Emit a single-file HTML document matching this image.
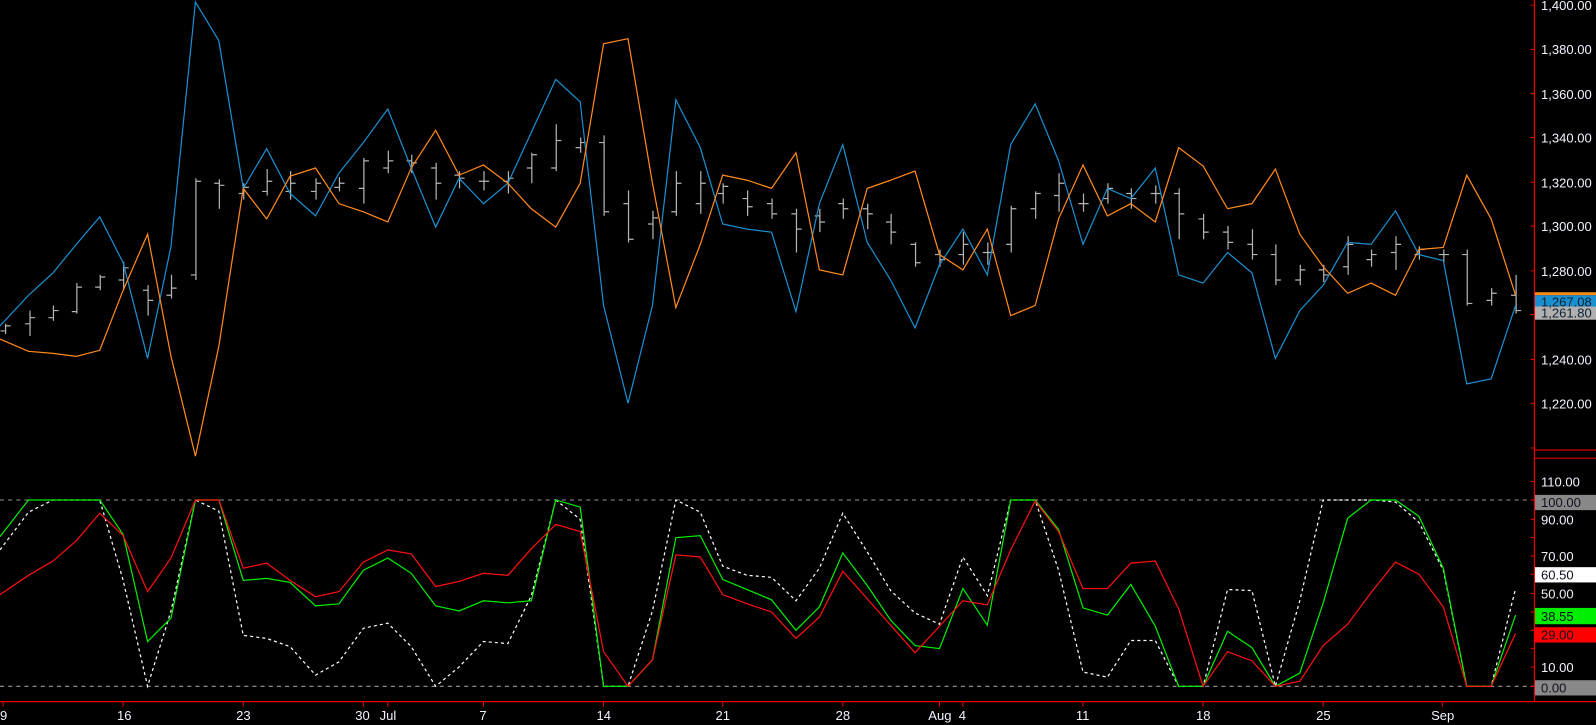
<!DOCTYPE html>
<html><head><meta charset="utf-8"><style>
html,body{margin:0;padding:0;background:#000;overflow:hidden}
svg{display:block}
text{font-family:"Liberation Sans",sans-serif;font-size:12.8px}
</style></head><body>
<svg width="1596" height="725" viewBox="0 0 1568 712" preserveAspectRatio="none" xmlns="http://www.w3.org/2000/svg">
<rect width="1568" height="712" fill="#000"/>
<g id="bars" stroke="#b4b4b4" stroke-width="1.2" fill="none"></g>
<polyline id="blue" fill="none" stroke="#1a8fd0" stroke-width="1.2"/>
<polyline id="orange" fill="none" stroke="#ff8a1c" stroke-width="1.2"/>
<line x1="0" y1="491" x2="1507" y2="491" stroke="#999" stroke-dasharray="4,4"/>
<line x1="0" y1="674" x2="1507" y2="674" stroke="#999" stroke-dasharray="4,4"/>
<polyline id="white" fill="none" stroke="#fff" stroke-width="1.2" stroke-dasharray="3,3"/>
<polyline id="green" fill="none" stroke="#00ee00" stroke-width="1.2"/>
<polyline id="red" fill="none" stroke="#ff1010" stroke-width="1.2"/>
<line x1="1507.5" y1="0" x2="1507.5" y2="689" stroke="#e00" stroke-width="1.2"/>
<line x1="1507" y1="442" x2="1568" y2="442" stroke="#e00"/>
<line x1="1507" y1="450" x2="1568" y2="450" stroke="#e00"/>
<line x1="0" y1="689" x2="1568" y2="689" stroke="#e00" stroke-width="1.2"/>
<g id="ticks" stroke="#e00"></g>
<g fill="#f0f4ff">
<text x="1514" y="10">1,400.00</text>
<text x="1514" y="53">1,380.00</text>
<text x="1514" y="97">1,360.00</text>
<text x="1514" y="140">1,340.00</text>
<text x="1514" y="184">1,320.00</text>
<text x="1514" y="227">1,300.00</text>
<text x="1514" y="271">1,280.00</text>
<text x="1514" y="358">1,240.00</text>
<text x="1514" y="401">1,220.00</text>
<text x="1514" y="478">110.00</text>
<text x="1514" y="515">90.00</text>
<text x="1514" y="551">70.00</text>
<text x="1514" y="588">50.00</text>
<text x="1514" y="660">10.00</text>
</g>
<rect x="1508" y="287" width="60" height="3" fill="#ff8a1c"/>
<rect x="1508" y="290" width="60" height="11" fill="#1a8fd0"/>
<rect x="1508" y="301" width="60" height="13" fill="#b0b0b0"/>
<text x="1514" y="301" fill="#102030">1,267.08</text>
<text x="1514" y="312" fill="#102030">1,261.80</text>
<rect x="1508" y="486" width="60" height="15" fill="#888"/><text x="1514" y="498" fill="#101020">100.00</text>
<rect x="1508" y="557" width="60" height="15" fill="#fff"/><text x="1514" y="569" fill="#101020">60.50</text>
<rect x="1508" y="597" width="60" height="16" fill="#00ee00"/><text x="1514" y="610" fill="#101020">38.55</text>
<rect x="1508" y="616" width="60" height="15" fill="#ff0000"/><text x="1514" y="628" fill="#101020">29.00</text>
<rect x="1508" y="668" width="60" height="15" fill="#888"/><text x="1514" y="680" fill="#101020">0.00</text>
<g fill="#f0f4ff">
<text x="0" y="707">9</text>
<text x="115" y="707">16</text>
<text x="232" y="707">23</text>
<text x="349" y="707">30</text>
<text x="373" y="707">Jul</text>
<text x="471" y="707">7</text>
<text x="586" y="707">14</text>
<text x="703" y="707">21</text>
<text x="821" y="707">28</text>
<text x="912" y="707">Aug</text>
<text x="942" y="707">4</text>
<text x="1057" y="707">11</text>
<text x="1175" y="707">18</text>
<text x="1293" y="707">25</text>
<text x="1406" y="707">Sep</text>
</g>
<script>
const ns="http://www.w3.org/2000/svg";
function P(id,a){document.getElementById(id).setAttribute("points",a.map(p=>p.join(",")).join(" "));}
P("blue",[[0,320],[28,290],[52,268],[75,240],[98,213],[121,258],[145,352],[168,242],[192,2],[215,40],[239,185],[262,146],[285,190],[310,212],[333,170],[357,140],[381,107],[404,165],[428,223],[451,175],[475,200],[499,180],[522,130],[546,78],[570,100],[593,300],[617,396],[641,300],[664,98],[688,145],[710,220],[734,225],[758,228],[782,306],[805,200],[828,142],[852,238],[875,275],[899,322],[923,260],[946,225],[970,270],[993,142],[1017,102],[1040,158],[1064,240],[1088,185],[1111,195],[1135,165],[1158,270],[1182,278],[1206,248],[1230,268],[1253,352],[1277,305],[1300,280],[1324,238],[1347,240],[1371,207],[1394,250],[1418,256],[1441,377],[1465,372],[1489,300]]);
P("orange",[[0,333],[28,345],[52,347],[75,350],[98,344],[121,285],[145,230],[168,350],[192,448],[215,340],[239,185],[262,215],[285,173],[310,165],[333,200],[357,208],[381,218],[404,165],[428,128],[451,172],[475,162],[499,180],[522,205],[546,223],[570,180],[593,43],[617,38],[641,180],[664,302],[688,240],[710,172],[734,177],[758,185],[782,150],[805,265],[828,270],[852,185],[875,177],[899,168],[923,250],[946,265],[970,225],[993,310],[1017,300],[1040,215],[1064,162],[1088,212],[1111,200],[1135,218],[1158,145],[1182,163],[1206,205],[1230,200],[1253,166],[1277,230],[1300,262],[1324,288],[1347,278],[1371,290],[1394,245],[1418,243],[1441,172],[1465,215],[1489,290]]);
P("green",[[0,527],[28,491],[52,491],[75,491],[98,491],[121,525],[145,630],[168,607],[192,491],[215,491],[239,570],[262,568],[285,572],[310,595],[333,593],[357,560],[381,548],[404,563],[428,595],[451,600],[475,590],[499,592],[522,590],[546,491],[570,498],[593,674],[617,674],[641,648],[664,528],[688,526],[710,569],[734,579],[758,589],[782,619],[805,596],[828,543],[852,575],[875,609],[899,634],[923,637],[946,578],[970,614],[993,491],[1017,491],[1040,520],[1064,597],[1088,604],[1111,574],[1135,615],[1158,674],[1182,674],[1206,620],[1230,636],[1253,674],[1277,661],[1300,592],[1324,509],[1347,491],[1371,491],[1394,507],[1418,558],[1441,674],[1465,674],[1489,604]]);
P("red",[[0,584],[28,565],[52,551],[75,531],[98,504],[121,526],[145,581],[168,548],[192,491],[215,491],[239,558],[262,553],[285,570],[310,586],[333,581],[357,552],[381,540],[404,544],[428,576],[451,571],[475,563],[499,565],[522,539],[546,515],[570,522],[593,640],[617,674],[641,648],[664,545],[688,547],[710,584],[734,593],[758,601],[782,627],[805,606],[828,561],[852,588],[875,614],[899,641],[923,615],[946,590],[970,594],[993,540],[1017,492],[1040,522],[1064,578],[1088,578],[1111,553],[1135,551],[1158,598],[1182,674],[1206,640],[1230,649],[1253,674],[1277,669],[1300,634],[1324,613],[1347,582],[1371,552],[1394,564],[1418,596],[1441,674],[1465,674],[1489,622]]);
P("white",[[0,540],[28,503],[52,491],[75,491],[98,491],[121,570],[145,674],[168,600],[192,491],[215,502],[239,624],[262,627],[285,635],[310,663],[333,650],[357,617],[381,612],[404,635],[428,674],[451,655],[475,630],[499,632],[522,585],[546,491],[570,510],[593,674],[617,674],[641,600],[664,491],[688,503],[710,556],[734,565],[758,567],[782,590],[805,558],[828,504],[852,542],[875,580],[899,602],[923,613],[946,547],[970,585],[993,491],[1017,491],[1040,560],[1064,660],[1088,665],[1111,629],[1135,629],[1158,674],[1182,674],[1206,579],[1230,580],[1253,674],[1277,590],[1300,491],[1324,491],[1347,491],[1371,493],[1394,513],[1418,560],[1441,674],[1465,674],[1489,578]]);
const bars=[[5,318,328,325,320],[29,305,330,318,312],[52,300,315,312,305],[75,278,308,306,282],[98,270,285,282,272],[121,257,285,275,263],[145,280,310,285,295],[168,270,293,290,283],[192,175,275,270,178],[215,176,205,180,182],[239,180,196,190,184],[262,166,192,188,178],[285,168,196,188,180],[310,175,196,188,180],[333,174,188,184,180],[357,155,200,185,158],[381,148,170,165,158],[404,152,170,158,160],[428,160,196,165,180],[451,168,185,172,175],[475,168,187,178,178],[499,168,190,178,175],[522,150,180,165,152],[546,122,168,165,138],[570,135,150,145,140],[593,133,212,140,208],[617,187,238,200,235],[641,207,235,220,214],[664,168,212,208,180],[688,168,210,200,180],[710,180,200,190,183],[734,187,212,195,203],[758,195,215,200,210],[782,205,248,210,225],[805,205,228,212,218],[828,195,215,200,205],[852,200,225,205,210],[875,210,240,218,228],[899,238,262,240,258],[923,245,262,250,255],[946,228,260,250,240],[970,238,260,248,248],[993,202,248,240,205],[1017,188,215,205,190],[1040,170,208,192,180],[1064,190,208,200,200],[1088,180,200,195,185],[1111,185,205,190,195],[1135,182,200,190,190],[1158,185,235,190,210],[1182,210,235,215,228],[1206,222,245,228,238],[1230,225,255,240,250],[1253,240,280,250,275],[1277,260,280,275,265],[1300,260,277,265,270],[1324,232,270,262,240],[1347,245,262,255,250],[1371,232,265,248,240],[1394,242,255,250,245],[1418,245,258,250,250],[1441,245,300,250,298],[1465,283,300,295,288],[1489,270,308,290,305]];
const g=document.getElementById("bars");let d="";
bars.forEach(b=>{const x=b[0]+0.5;d+=`M${x} ${b[1]}V${b[2]}M${x-5} ${b[3]}H${x}M${x} ${b[4]}H${x+5}`;});
const p=document.createElementNS(ns,"path");p.setAttribute("d",d);g.appendChild(p);
const t=document.getElementById("ticks");let td="";
[5,48.5,92,135,179,222,266,309,353,396,440,473,491,510,528,546,564,583,601,619,637,655,674].forEach(y=>td+=`M1504 ${y}H1507`);
[3,121,239,357,381,475,593,710,828,923,946,1064,1182,1300,1417].forEach(x=>td+=`M${x} 689V694`);
const tp=document.createElementNS(ns,"path");tp.setAttribute("d",td);t.appendChild(tp);
</script>
</svg>
</body></html>
